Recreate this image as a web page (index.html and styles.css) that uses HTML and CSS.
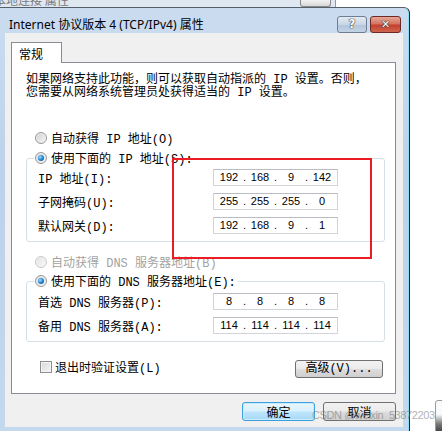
FILE: index.html
```html
<!DOCTYPE html>
<html lang="zh-CN">

<head>
    <meta charset="UTF-8">
    <meta name="viewport" content="width=device-width, initial-scale=1.0">
    <title>Internet 协议版本 4 (TCP/IPv4) 属性</title>
    <link rel="stylesheet" href="styles.css">
</head>

<body>
    <div class="screen">
        <div class="behind">
            <span class="behind-title">本地连接 属性</span>
            <span class="behind-close"></span>
        </div>
        <div class="dialog">
            <div class="titlebar">
                <span class="title">Internet 协议版本 4 (TCP/IPv4) 属性</span>
                <div class="caption-buttons">
                    <button class="cap help">?</button>
                    <button class="cap close">✕</button>
                </div>
            </div>
            <div class="client">
                <div class="tab">常规</div>
                <div class="panel">
                    <p class="intro">如果网络支持此功能，则可以获取自动指派的 IP 设置。否则，<br>您需要从网络系统管理员处获得适当的 IP 设置。</p>
                    <div class="option first"><span class="radio"></span>自动获得 IP 地址(O)</div>
                    <fieldset class="group">
                        <legend><span class="option"><span class="radio checked"></span>使用下面的 IP 地址(S):</span></legend>
                        <div class="field">
                            <span class="label">IP 地址(I):</span>
                            <div class="ip"><span>192</span><i>.</i><span>168</span><i>.</i><span>9</span><i>.</i><span>142</span></div>
                        </div>
                        <div class="field">
                            <span class="label">子网掩码(U):</span>
                            <div class="ip"><span>255</span><i>.</i><span>255</span><i>.</i><span>255</span><i>.</i><span>0</span></div>
                        </div>
                        <div class="field">
                            <span class="label">默认网关(D):</span>
                            <div class="ip"><span>192</span><i>.</i><span>168</span><i>.</i><span>9</span><i>.</i><span>1</span></div>
                        </div>
                    </fieldset>
                    <div class="option disabled dns-auto"><span class="radio"></span>自动获得 DNS 服务器地址(B)</div>
                    <fieldset class="group dns">
                        <legend><span class="option"><span class="radio checked"></span>使用下面的 DNS 服务器地址(E):</span></legend>
                        <div class="field">
                            <span class="label">首选 DNS 服务器(P):</span>
                            <div class="ip"><span>8</span><i>.</i><span>8</span><i>.</i><span>8</span><i>.</i><span>8</span></div>
                        </div>
                        <div class="field">
                            <span class="label">备用 DNS 服务器(A):</span>
                            <div class="ip"><span>114</span><i>.</i><span>114</span><i>.</i><span>114</span><i>.</i><span>114</span></div>
                        </div>
                    </fieldset>
                    <div class="bottom-row">
                        <label class="check"><span class="box"></span>退出时验证设置(L)</label>
                        <button class="btn advanced">高级(V)...</button>
                    </div>
                </div>
                <div class="actions">
                    <button class="btn default">确定</button>
                    <button class="btn">取消</button>
                </div>
            </div>
        </div>
        <div class="highlight"></div>
        <div class="watermark">CSDN @weixin_53872203</div>
        <div class="taskbar-edge"></div>
    </div>
</body>

</html>
```

FILE: styles.css
```css
* {
    box-sizing: border-box;
}

body {
    margin: 0;
    background-color: #fff;
    font-family: 'Liberation Mono', 'Noto Sans CJK SC', monospace;
    font-size: 12px;
    color: #000;
}

.screen {
    position: relative;
    width: 442px;
    height: 431px;
    overflow: hidden;
    background-color: #fff;
}

/* window behind the dialog */
.behind {
    display: flex;
    width: 336px;
    height: 7px;
    overflow: hidden;
    background: #dfe7f0;
    border-right: 1px solid #8d9bab;
}

.behind-title {
    margin: -6px 0 0 -6px;
    line-height: 12px;
    color: #7a7a7a;
    font-family: 'Noto Sans CJK SC', sans-serif;
    white-space: nowrap;
}

.behind-close {
    width: 31px;
    margin-left: auto;
    margin-right: 4px;
    border: 1px solid #8a8a8a;
    border-top: none;
    border-radius: 0 0 3px 3px;
    background: linear-gradient(#f2f2f2, #d8d8d8);
}

/* dialog frame */
.dialog {
    width: 410px;
    height: 424px;
    padding: 0 6px 0 5px;
    background: linear-gradient(#cbdcf0, #bcd2ea 40%, #c4d8ee);
    border-top: 1px solid #55606c;
    border-right: 1px solid #1e2a33;
    border-top-right-radius: 6px;
    box-shadow: inset -1px 0 0 #8fdcf4;
}

.titlebar {
    display: flex;
    align-items: flex-start;
    height: 25px;
    padding: 8px 2px 0 4px;
}

.title {
    line-height: 17px;
    font-family: 'Noto Sans', 'Noto Sans CJK SC', sans-serif;
    font-size: 12px;
    white-space: nowrap;
}

.caption-buttons {
    display: flex;
    gap: 3px;
    margin-left: auto;
}

.cap {
    height: 17px;
    padding: 0;
    border-radius: 3px;
    color: #fff;
    font-family: 'DejaVu Sans', sans-serif;
    font-weight: bold;
    line-height: 15px;
    text-shadow: 0 0 1px #333, 0 0 1px #333, 0 0 1px #333;
}

.help {
    width: 30px;
    border: 1px solid #6f7f92;
    background: linear-gradient(#e3ebf4, #c9d6e5 50%, #b3c5da 51%, #c3d3e6);
    font-size: 12px;
}

.close {
    width: 31px;
    border: 1px solid #6b2a23;
    background: linear-gradient(#e7a797, #d47562 45%, #c2412f 55%, #d0654e);
    font-size: 11px;
}

.client {
    height: 394px;
    padding: 9px 7px 0 6px;
    background-color: #f0f0f0;
}

.tab {
    position: relative;
    z-index: 1;
    width: 51px;
    height: 21px;
    margin-bottom: -1px;
    padding: 4px 0 0 7px;
    line-height: 13px;
    background-color: #fff;
    border: 1px solid #898c95;
    border-bottom: none;
    font-family: 'Noto Sans CJK SC', sans-serif;
}

.panel {
    height: 332px;
    padding: 0 10px 0 14px;
    background-color: #fff;
    border: 1px solid #898c95;
}

.intro {
    margin: 0;
    padding-top: 11px;
    line-height: 13px;
    white-space: nowrap;
}

.option {
    display: flex;
    align-items: center;
    height: 16px;
    white-space: nowrap;
}

.option.first {
    margin-top: 30px;
    padding-left: 9px;
}

.dns-auto {
    margin-top: 12px;
    padding-left: 9px;
}

.disabled {
    color: #a3a3a3;
}

.radio {
    position: relative;
    flex: none;
    width: 12px;
    height: 12px;
    margin-right: 4px;
    border: 1px solid #979797;
    border-radius: 50%;
    background: linear-gradient(135deg, #cfcfcf, #f7f7f7);
    box-shadow: inset 0 0 0 1px #f2f2f2;
}

.disabled .radio {
    border-color: #c9c9c9;
    background: linear-gradient(135deg, #e2e2e2, #fafafa);
}

.radio.checked::after {
    content: "";
    position: absolute;
    left: 2px;
    top: 2px;
    width: 6px;
    height: 6px;
    border-radius: 50%;
    background: radial-gradient(circle at 35% 35%, #9ee0ff 0, #2a8fdc 45%, #0b3d78 100%);
}

.group {
    min-width: 0;
    margin: 4px 0 0;
    padding: 0 10px 7px 7px;
    border: 1px solid #d5dfe5;
    border-radius: 3px;
}

.group.dns {
    margin-top: 3px;
}

.group legend {
    padding: 0 2px 0 1px;
}

.field {
    display: flex;
    align-items: center;
    height: 17px;
    margin-top: 7px;
    padding-left: 4px;
}

.group legend + .field {
    margin-top: 3px;
}

.group.dns legend + .field {
    margin-top: 4px;
}

.label {
    width: 175px;
    white-space: nowrap;
}

.ip {
    display: flex;
    width: 125px;
    height: 17px;
    padding: 0 4px;
    border: 1px solid #d1d5da;
    border-top-color: #b9bdc3;
    font-family: 'Liberation Sans', sans-serif;
    font-size: 11px;
    line-height: 15px;
}

.ip span {
    width: 22px;
    text-align: center;
}

.ip i {
    width: 9px;
    font-style: normal;
    text-align: center;
}

.bottom-row {
    display: flex;
    align-items: flex-start;
    justify-content: space-between;
    margin-top: 18px;
    padding: 0 2px 0 14px;
}

.check {
    display: flex;
    align-items: center;
    height: 13px;
    white-space: nowrap;
}

.box {
    width: 12px;
    height: 12px;
    margin-right: 3px;
    border: 1px solid #8e8f8f;
    background: linear-gradient(135deg, #d8d8d8, #f6f6f6);
    box-shadow: inset 0 0 0 1px #f4f4f4;
}

.btn {
    height: 19px;
    padding: 0;
    border: 1px solid #707070;
    border-radius: 3px;
    background: linear-gradient(#f2f2f2, #ebebeb 48%, #dddddd 52%, #cfcfcf);
    font-family: 'Noto Sans CJK SC', sans-serif;
    font-size: 12px;
    line-height: 15px;
    color: #000;
}

.btn.advanced {
    width: 88px;
    height: 18px;
    font-family: 'Liberation Mono', 'Noto Sans CJK SC', monospace;
}

.actions {
    display: flex;
    justify-content: flex-end;
    gap: 8px;
    margin-top: 8px;
}

.actions .btn {
    width: 73px;
}

.btn.default {
    border-color: #3c9edc;
    background: linear-gradient(#eaf6fd, #d9f0fc 48%, #bee6fd 52%, #a7d9f5);
    box-shadow: inset 0 0 0 1px #c6ecff;
}

/* annotation and overlays */
.highlight {
    position: absolute;
    left: 172px;
    top: 158px;
    width: 200px;
    height: 101px;
    border: 2px solid #ec1c24;
}

.watermark {
    position: absolute;
    left: 312px;
    top: 409px;
    font-family: 'Liberation Sans', sans-serif;
    font-size: 11px;
    letter-spacing: -0.4px;
    color: rgba(120, 120, 120, 0.6);
    white-space: nowrap;
}

.taskbar-edge {
    position: absolute;
    left: 435px;
    top: 400px;
    width: 14px;
    height: 40px;
    border: 1px solid #9a9a9a;
    border-radius: 3px;
    background: linear-gradient(#fafafa 35%, #7a7a7a 60%, #111);
}
```
